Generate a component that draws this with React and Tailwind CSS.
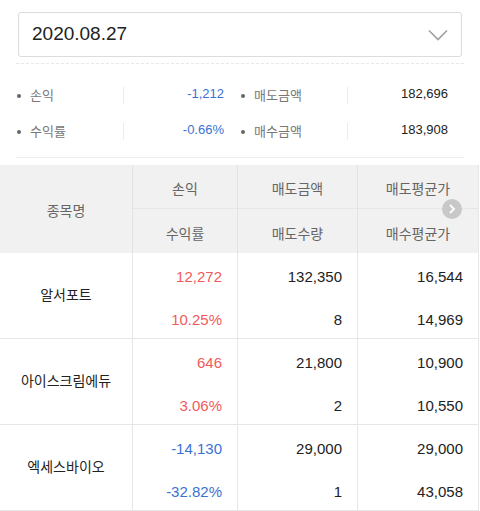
import React from "react";

const FONT = { fontFamily: '"Liberation Sans", "Noto Sans CJK KR", sans-serif' };

const summary = [
  [
    { label: "손익", value: "-1,212", tone: "blue" },
    { label: "매도금액", value: "182,696", tone: "dark" },
  ],
  [
    { label: "수익률", value: "-0.66%", tone: "blue" },
    { label: "매수금액", value: "183,908", tone: "dark" },
  ],
];

const rows = [
  {
    name: "알서포트",
    tone: "red",
    top: ["12,272", "132,350", "16,544"],
    bottom: ["10.25%", "8", "14,969"],
  },
  {
    name: "아이스크림에듀",
    tone: "red",
    top: ["646", "21,800", "10,900"],
    bottom: ["3.06%", "2", "10,550"],
  },
  {
    name: "엑세스바이오",
    tone: "blue",
    top: ["-14,130", "29,000", "29,000"],
    bottom: ["-32.82%", "1", "43,058"],
  },
];

const toneClass = {
  red: "text-[#f15b5b]",
  blue: "text-[#3a72d4]",
  dark: "text-[#222]",
};

function SummaryCell({ label, value, tone }) {
  return (
    <div className="flex h-[17px] items-center">
      <div className="flex w-[107px] items-center">
        <span className="ml-[1px] h-[4px] w-[4px] rounded-full bg-[#666]" />
        <span className="ml-[9px] text-[13px] text-[#777]">{label}</span>
      </div>
      <span className="h-[17px] border-l border-[#ececec]" />
      <div className={`flex-1 pr-4 text-right text-[13px] -mt-[3px] ${toneClass[tone]}`}>{value}</div>
    </div>
  );
}

function HeadCell({ children, last }) {
  return (
    <div
      className={`flex h-[44px] items-center justify-center pt-[6px] text-[14px] text-[#666] ${last ? "" : "border-b border-[#e6e6e6]"}`}
    >
      {children}
    </div>
  );
}

export default function App() {
  return (
    <div className="h-[511px] w-[480px] overflow-hidden bg-white" style={FONT}>
      <div className="px-4 pt-3">
        <div className="mx-[2px] flex h-[45px] items-center justify-between rounded-[3px] border border-[#dcdcdc] pl-[13px] pr-[13px]">
          <span className="text-[19px] text-[#222]">2020.08.27</span>
          <svg width="20" height="12" viewBox="0 0 20 12" fill="none">
            <path d="M1 1.5 L10 10.5 L19 1.5" stroke="#a0a0a0" strokeWidth="1.6" />
          </svg>
        </div>
        <div className="mt-[6px] border-t border-dashed border-[#e8e8e8]" />
        <div className="grid grid-cols-2 gap-y-[19px] pt-[23px] pb-[17px]">
          {summary.flat().map((item) => (
            <SummaryCell key={item.label} {...item} />
          ))}
        </div>
        <div className="border-t border-[#ececec]" />
      </div>

      <div className="relative mt-[7px] w-[479px] border-r border-[#e6e6e6]">
        <div className="grid grid-cols-[133px_105px_120px_120px] bg-[#f1f1f1]">
          <div className="flex items-center justify-center border-r border-[#e3e3e3] pt-[4px] text-[14px] text-[#666]">
            종목명
          </div>
          <div className="border-r border-[#e3e3e3]">
            <HeadCell>손익</HeadCell>
            <HeadCell last>수익률</HeadCell>
          </div>
          <div className="border-r border-[#e3e3e3]">
            <HeadCell>매도금액</HeadCell>
            <HeadCell last>매도수량</HeadCell>
          </div>
          <div>
            <HeadCell>매도평균가</HeadCell>
            <HeadCell last>매수평균가</HeadCell>
          </div>
        </div>

        <div className="absolute right-[16px] top-[34px] flex h-[20px] w-[20px] items-center justify-center rounded-full bg-[#c8c8c8]">
          <svg width="8" height="10" viewBox="0 0 8 10" fill="none">
            <path d="M2 1 L6 5 L2 9" stroke="#fff" strokeWidth="1.8" />
          </svg>
        </div>

        {rows.map((row) => (
          <div
            key={row.name}
            className="grid h-[86px] grid-cols-[133px_105px_120px_120px] border-b border-[#e6e6e6]"
          >
            <div className="flex items-center justify-center border-r border-[#e6e6e6] text-[14px] text-[#222]">
              {row.name}
            </div>
            {[0, 1, 2].map((i) => (
              <div
                key={i}
                className={`flex flex-col gap-[25px] pt-[15px] pr-[15px] text-right text-[15px] leading-[18px] ${
                  i < 2 ? "border-r border-[#e6e6e6]" : ""
                } ${i === 0 ? toneClass[row.tone] : "text-[#222]"}`}
              >
                <span>{row.top[i]}</span>
                <span>{row.bottom[i]}</span>
              </div>
            ))}
          </div>
        ))}
      </div>
    </div>
  );
}
